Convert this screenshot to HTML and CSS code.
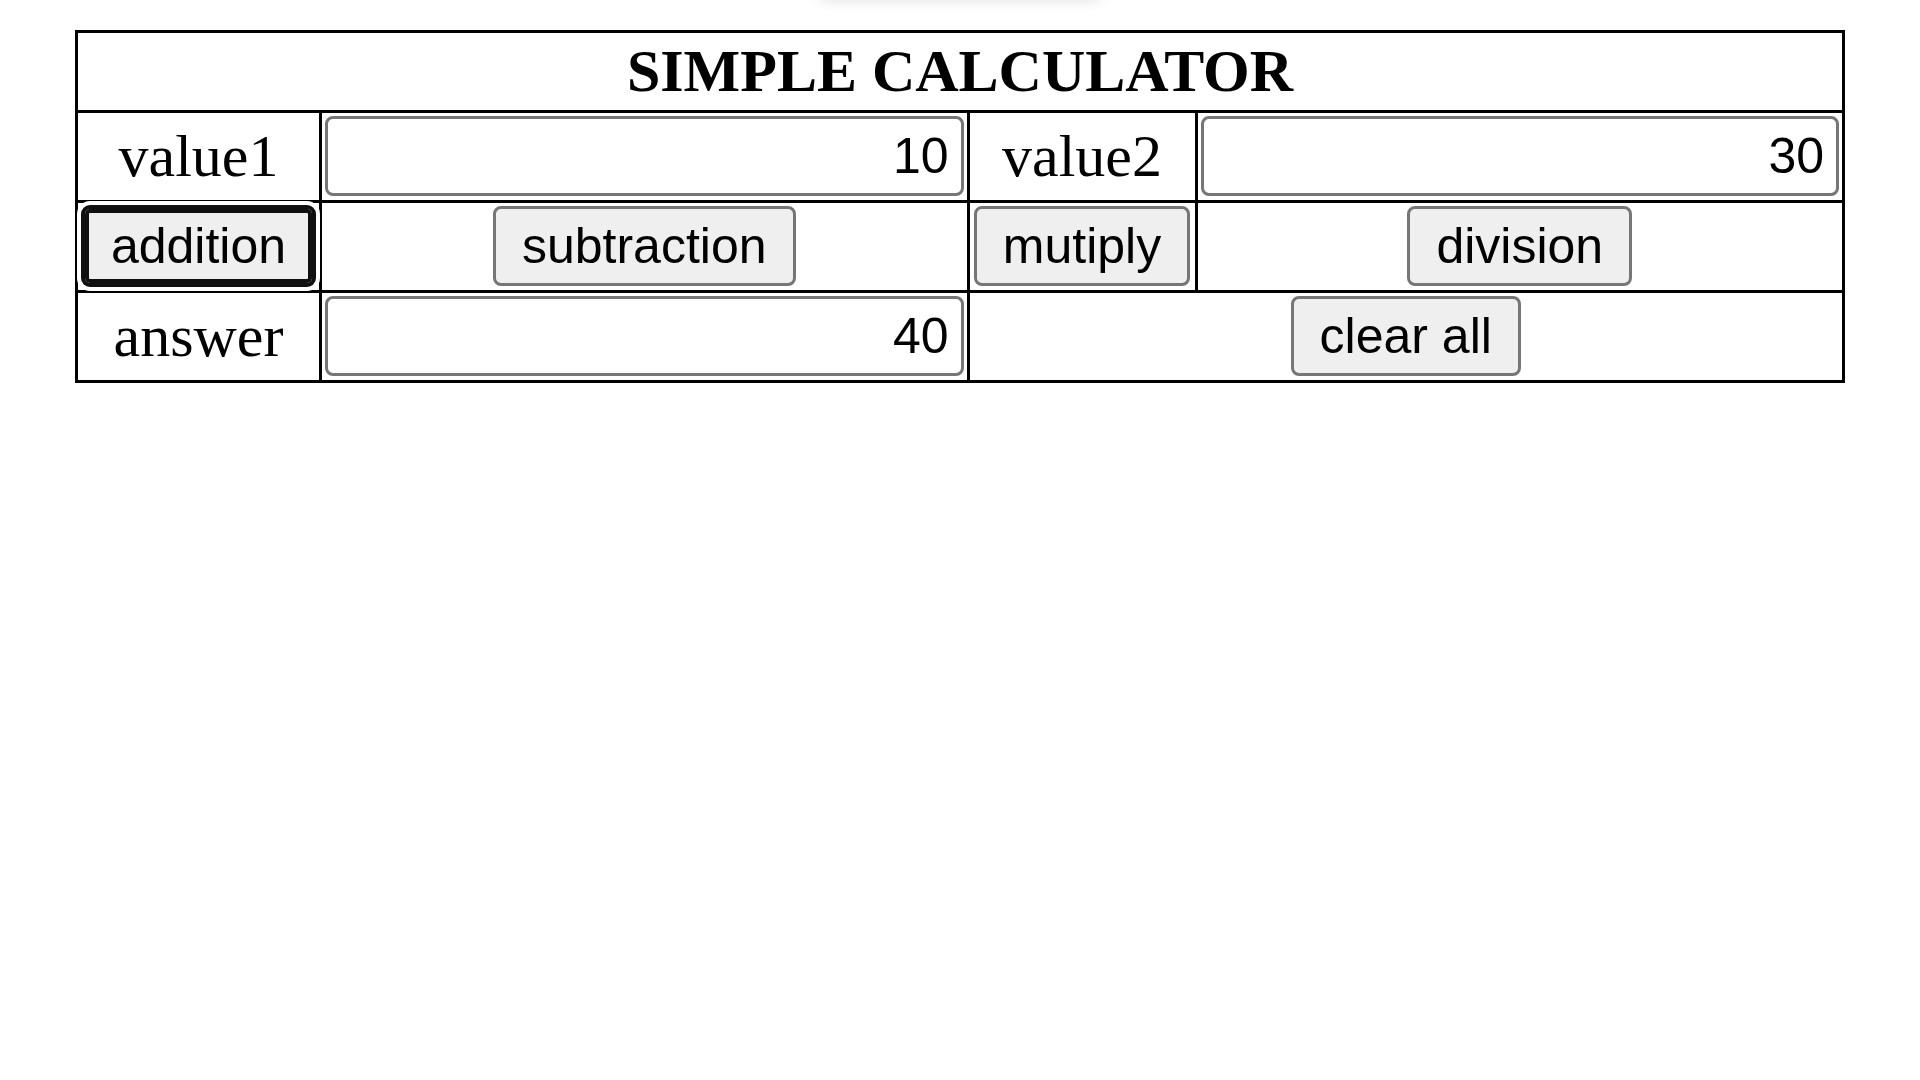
FILE: index.html
```html
<!DOCTYPE html>
<html lang="en">
<head>
<meta charset="utf-8">
<meta name="viewport" content="width=device-width, initial-scale=1">
<title>Simple Calculator</title>
<link rel="stylesheet" href="styles.css">
</head>
<body>
<div class="top-shadow"></div>
<form class="calculator">
<table class="grid">
<colgroup>
<col class="col-first"><col><col class="col-third"><col>
</colgroup>
<tr>
<th class="cell title" colspan="4">SIMPLE CALCULATOR</th>
</tr>
<tr>
<td class="cell"><label for="value1">value1</label></td>
<td class="cell"><input class="field" id="value1" type="text" value="10"></td>
<td class="cell"><label for="value2">value2</label></td>
<td class="cell"><input class="field" id="value2" type="text" value="30"></td>
</tr>
<tr>
<td class="cell"><button class="button active" type="button">addition</button></td>
<td class="cell"><button class="button" type="button">subtraction</button></td>
<td class="cell"><button class="button" type="button">mutiply</button></td>
<td class="cell"><button class="button" type="button">division</button></td>
</tr>
<tr>
<td class="cell"><label for="answer">answer</label></td>
<td class="cell"><input class="field" id="answer" type="text" value="40"></td>
<td class="cell" colspan="2"><button class="button" type="reset">clear all</button></td>
</tr>
</table>
</form>
</body>
</html>
```
FILE: styles.css
```css
* {
  box-sizing: border-box;
}

body {
  margin: 0;
  padding: 30px 75px;
  background: #fff;
  color: #000;
  font-family: "Liberation Serif", "Times New Roman", serif;
  font-size: 60px;
  line-height: 69px;
}

/* Soft shadow of a bar that sits above the page */
.top-shadow {
  position: absolute;
  top: -40px;
  left: 50%;
  width: 280px;
  height: 36px;
  margin-left: -140px;
  border-radius: 8px;
  box-shadow: 0 2px 16px rgba(0, 0, 0, 0.16);
}

.calculator {
  margin: 0;
}

.grid {
  width: 100%;
  table-layout: fixed;
  border-collapse: collapse;
}

.col-first {
  width: 244px;
}

.col-third {
  width: 228px;
}

.cell {
  height: 90px;
  padding: 3px 3px 4px;
  border: 3px solid #000;
  text-align: center;
  vertical-align: middle;
}

.title {
  height: 80px;
  font-weight: bold;
}

.field,
.button {
  display: inline-block;
  height: 80px;
  border: 3px solid #767676;
  border-radius: 8px;
  color: #000;
  font-family: "Liberation Sans", Arial, sans-serif;
  font-size: 50px;
  line-height: 58px;
  vertical-align: top;
}

.field {
  width: 100%;
  padding: 0 12px;
  background: #fff;
  text-align: right;
}

.button {
  margin: 0;
  padding: 0 26px;
  background: #efefef;
  white-space: nowrap;
}

/* Focus ring: a dark band with a white halo */
.active {
  border-color: #101010;
  box-shadow:
    inset 0 0 0 4px #101010,
    0 0 0 1px #101010,
    0 0 0 5px #fff;
}
```
